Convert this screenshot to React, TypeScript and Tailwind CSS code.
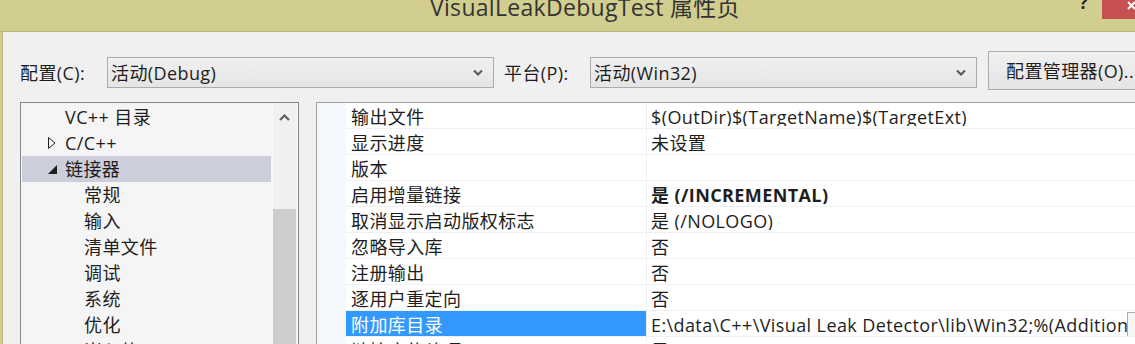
import React from "react";

const tree = [
  { label: "VC++ 目录", level: 0, arrow: "none" },
  { label: "C/C++", level: 0, arrow: "closed" },
  { label: "链接器", level: 0, arrow: "open", selected: true },
  { label: "常规", level: 1 },
  { label: "输入", level: 1 },
  { label: "清单文件", level: 1 },
  { label: "调试", level: 1 },
  { label: "系统", level: 1 },
  { label: "优化", level: 1 },
  { label: "嵌入的 IDL", level: 1 },
];

const props = [
  { name: "输出文件", value: "$(OutDir)$(TargetName)$(TargetExt)" },
  { name: "显示进度", value: "未设置" },
  { name: "版本", value: "" },
  { name: "启用增量链接", value: "是 (/INCREMENTAL)", bold: true },
  { name: "取消显示启动版权标志", value: "是 (/NOLOGO)" },
  { name: "忽略导入库", value: "否" },
  { name: "注册输出", value: "否" },
  { name: "逐用户重定向", value: "否" },
  {
    name: "附加库目录",
    value: "E:\\data\\C++\\Visual Leak Detector\\lib\\Win32;%(AdditionalLibraryDirectories)",
    selected: true,
  },
  { name: "链接库依赖项", value: "是" },
];

function Chevron() {
  return (
    <svg width="10" height="7" viewBox="0 0 10 7" className="shrink-0">
      <path d="M1 1.5 L5 5.5 L9 1.5" fill="none" stroke="#555" strokeWidth="2" />
    </svg>
  );
}

function Combo({ text }: { text: string }) {
  return (
    <div className="mt-[6px] h-[31px] w-[387px] shrink-0 border border-[#acacac] bg-gradient-to-b from-[#f0f0f0] to-[#e5e5e5] flex items-center pl-[3px] pr-[10px]">
      <span className="flex-1 text-[#1e1e1e]">{text}</span>
      <Chevron />
    </div>
  );
}

export default function App() {
  return (
    <div className="w-[1135px] h-[344px] overflow-hidden bg-[#d2ce8f] flex flex-col font-['Open_Sans','Noto_Sans_CJK_SC',sans-serif] text-[18px] tracking-[0.4px] leading-none text-[#1e1e1e]">
      {/* title bar */}
      <div className="h-[32px] shrink-0 flex items-start border-b border-[#b8b37c]">
        <div className="ml-[430px] -mt-[4px] text-[23px] tracking-[0.3px] text-[#333] whitespace-nowrap">
          VisualLeakDebugTest 属性页
        </div>
        <div className="ml-auto mr-[14px] -mt-[6px] text-[17px] font-bold text-[#222]">?</div>
        <div className="w-[33px] h-[19px] bg-[#c75050] flex justify-end items-start overflow-hidden">
          <svg width="8" height="12" viewBox="0 0 8 12">
            <path d="M1 2 L8 9 M1 9 L8 2" stroke="#fff" strokeWidth="2" />
          </svg>
        </div>
      </div>

      {/* body */}
      <div className="flex-1 ml-[2px] border-l border-[#b8b37c] bg-[#f0f0f0] flex flex-col">
        {/* configuration row */}
        <div className="h-[58px] shrink-0 flex items-start pt-[19px] pl-[17px]">
          <div className="w-[87px] shrink-0 mt-[6px] h-[31px] flex items-center">配置(C):</div>
          <Combo text="活动(Debug)" />
          <div className="w-[86px] shrink-0 ml-[10px] mt-[6px] h-[31px] flex items-center">平台(P):</div>
          <Combo text="活动(Win32)" />
          <div className="ml-[11px] h-[39px] w-[160px] shrink-0 border border-[#acacac] bg-gradient-to-b from-[#f0f0f0] to-[#e5e5e5] flex items-center pl-[17px] whitespace-nowrap">
            配置管理器(O)...
          </div>
        </div>

        {/* panels */}
        <div className="flex-1 flex items-start pt-[12px] pl-[17px] gap-[17px]">
          {/* tree */}
          <div className="w-[279px] h-[260px] shrink-0 border border-[#828790] bg-[#f5f5f5] flex">
            <div className="flex-1 pt-[1px]">
              {tree.map((t) => (
                <div
                  key={t.label}
                  className={`h-[26px] flex items-center mx-[1px] ${t.selected ? "bg-[#cccedb]" : ""} ${t.level === 1 ? "pl-[62px]" : "pl-[26px]"}`}
                >
                  {t.level === 0 && (
                    <span className="w-[17px] shrink-0 flex items-center">
                      {t.arrow === "closed" && (
                        <svg width="8" height="12" viewBox="0 0 8 12">
                          <path d="M0.5 0.5 L7 6 L0.5 11.5 Z" fill="none" stroke="#1e1e1e" />
                        </svg>
                      )}
                      {t.arrow === "open" && (
                        <svg width="9" height="9" viewBox="0 0 9 9">
                          <path d="M9 0 L9 9 L0 9 Z" fill="#1e1e1e" />
                        </svg>
                      )}
                    </span>
                  )}
                  <span className="whitespace-nowrap">{t.label}</span>
                </div>
              ))}
            </div>
            <div className="w-[24px] mr-[2px] bg-[#f0f0f0] border-l border-[#f8f8f8] flex flex-col">
              <div className="h-[26px] flex items-center justify-center pt-[2px]">
                <svg width="11" height="7" viewBox="0 0 11 7">
                  <path d="M1 6 L5.5 1.5 L10 6" fill="none" stroke="#606060" strokeWidth="2.2" />
                </svg>
              </div>
              <div className="mt-[80px] flex-1 bg-[#cdcdcd]" />
            </div>
          </div>

          {/* property grid */}
          <div className="flex-1 h-[260px] border-l border-t border-[#a0a0a0] bg-[#f4f7fb] pl-[29px] overflow-hidden">
            {props.map((p) => (
              <div key={p.name} className="h-[26px] flex border-b border-[#eef0f4]">
                <div
                  className={`w-[301px] shrink-0 pl-[5px] pt-[3px] flex items-center whitespace-nowrap border-r border-[#eef0f4] ${p.selected ? "bg-[#3399ff] text-white" : "bg-white"}`}
                >
                  {p.name}
                </div>
                <div className="flex-1 min-w-0 bg-white flex items-center overflow-hidden">
                  <span className={`flex-1 pl-[4px] pt-[3px] whitespace-nowrap overflow-hidden ${p.bold ? "font-bold" : ""}`}>
                    {p.value}
                  </span>
                  {p.selected && (
                    <span className="w-[8px] h-[24px] shrink-0 bg-[#f5f5f5] border-l border-t border-[#acacac]" />
                  )}
                </div>
              </div>
            ))}
          </div>
        </div>
      </div>
    </div>
  );
}
